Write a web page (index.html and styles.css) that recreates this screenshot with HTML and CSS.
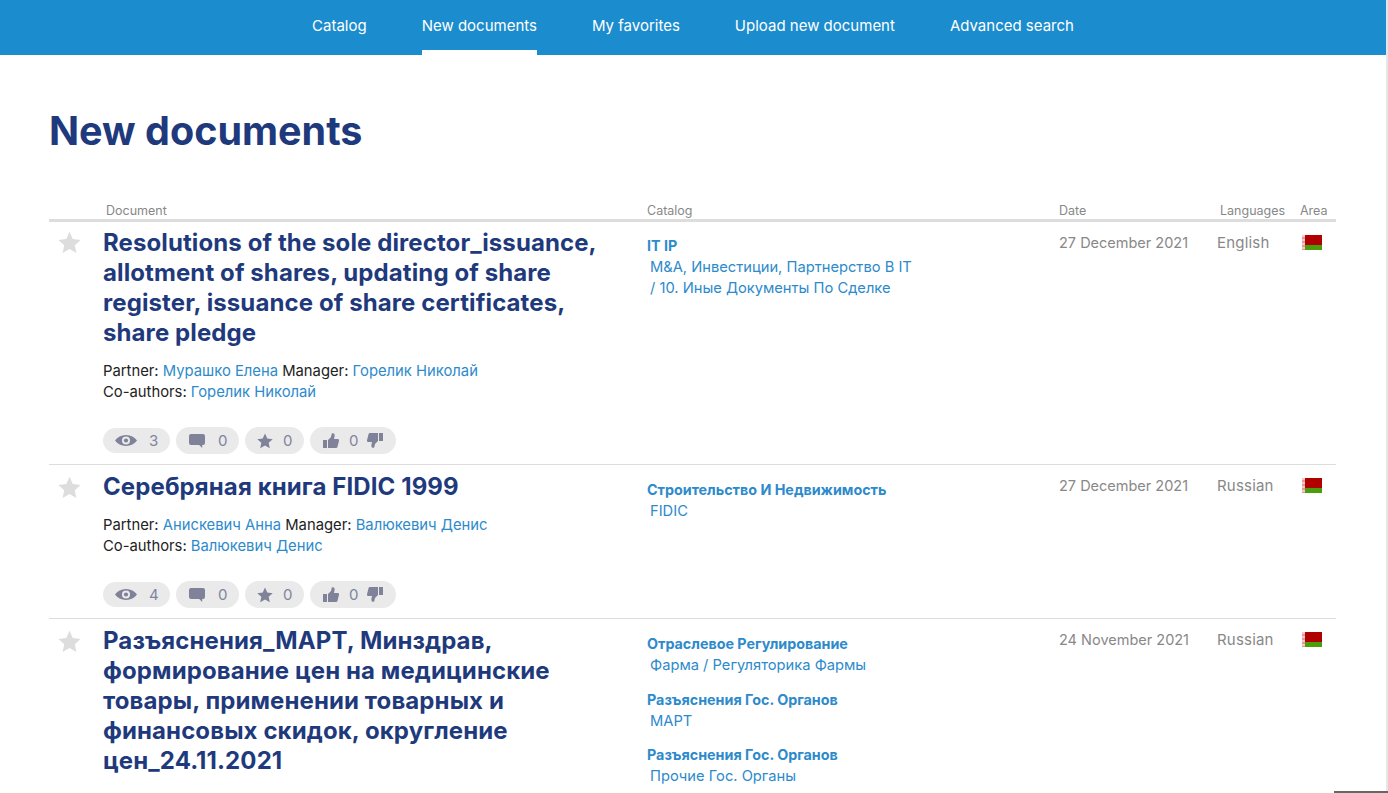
FILE: index.html
```html
<!DOCTYPE html>
<html lang="en">
<head>
<meta charset="utf-8">
<title>New documents</title>
<link rel="stylesheet" href="styles.css">
</head>
<body>
<svg class="defs" width="0" height="0" aria-hidden="true">
  <symbol id="i-star" viewBox="0 0 24 24"><path d="M12 .8l3.4 7.6 8.2.9-6.1 5.500 1.700 8.100L12 18.800l-7.200 4.100 1.700-8.100L.4 9.300l8.200-.9z"/></symbol>
  <symbol id="i-eye" viewBox="0 0 24 12"><path fill-rule="evenodd" d="M12 0c5.200 0 9.400 2.400 12 6-2.600 3.600-6.800 6-12 6S2.600 9.600 0 6c2.600-3.600 6.800-6 12-6zm0 1.600a4.400 4.400 0 1 0 0 8.800 4.400 4.400 0 0 0 0-8.800z"/><circle cx="12" cy="6" r="2.300"/></symbol>
  <symbol id="i-comment" viewBox="0 0 16 14"><path d="M2 0h12a2 2 0 0 1 2 2v7a2 2 0 0 1-2 2h-.8v3l-3-3H2a2 2 0 0 1-2-2V2a2 2 0 0 1 2-2z"/></symbol>
  <symbol id="i-up" viewBox="0 0 16 15"><path d="M0 7h4v8H0zM5 7l3-3 .8-3.500c1.800-1 3.200.5 2.800 2.500L11 6h3.700c.9 0 1.500.8 1.300 1.700l-1.500 6c-.2.800-.9 1.300-1.700 1.300H5z"/></symbol>
  <symbol id="i-down" viewBox="0 0 16 15"><path d="M16 8h-4V0h4zM11 8l-3 3-.8 3.500c-1.800 1-3.200-.5-2.800-2.500L5 9H1.300C.4 9-.2 8.200 0 7.300l1.500-6C1.700.5 2.400 0 3.200 0H11z"/></symbol>
</svg>

<header class="topbar">
  <nav class="nav">
    <a class="nav-item" href="#">Catalog</a>
    <a class="nav-item active" href="#">New documents</a>
    <a class="nav-item" href="#">My favorites</a>
    <a class="nav-item" href="#">Upload new document</a>
    <a class="nav-item" href="#">Advanced search</a>
  </nav>
</header>

<main class="content">
  <h1 class="page-title">New documents</h1>

  <div class="doc-table">
    <div class="row head">
      <div></div>
      <div class="h-doc">Document</div>
      <div>Catalog</div>
      <div>Date</div>
      <div class="h-lang">Languages</div>
      <div>Area</div>
    </div>

    <article class="row doc">
      <svg class="fav"><use href="#i-star"/></svg>
      <div class="main">
        <h2 class="doc-title">Resolutions of the sole director_issuance, allotment of shares, updating of share register, issuance of share certificates, share pledge</h2>
        <p class="people">Partner: <a href="#">Мурашко Елена</a> Manager: <a href="#">Горелик Николай</a><br>Co-authors: <a href="#">Горелик Николай</a></p>
        <div class="stats">
          <span class="pill pill-views"><svg class="ic eye"><use href="#i-eye"/></svg><span class="n">3</span></span>
          <span class="pill pill-comments"><svg class="ic cm"><use href="#i-comment"/></svg><span class="n">0</span></span>
          <span class="pill pill-favs"><svg class="ic st"><use href="#i-star"/></svg><span class="n">0</span></span>
          <span class="pill pill-votes"><svg class="ic th"><use href="#i-up"/></svg><span class="n">0</span><svg class="ic th"><use href="#i-down"/></svg></span>
        </div>
      </div>
      <div class="cats">
        <div class="cat"><a class="cat-name" href="#">IT IP</a><div class="cat-path"><a href="#">M&amp;A, Инвестиции, Партнерство В IT</a><br>/ <a href="#">10. Иные Документы По Сделке</a></div></div>
      </div>
      <div class="meta date">27 December 2021</div>
      <div class="meta lang">English</div>
      <div class="flag"></div>
    </article>

    <article class="row doc">
      <svg class="fav"><use href="#i-star"/></svg>
      <div class="main">
        <h2 class="doc-title">Серебряная книга FIDIC 1999</h2>
        <p class="people">Partner: <a href="#">Анискевич Анна</a> Manager: <a href="#">Валюкевич Денис</a><br>Co-authors: <a href="#">Валюкевич Денис</a></p>
        <div class="stats">
          <span class="pill pill-views"><svg class="ic eye"><use href="#i-eye"/></svg><span class="n">4</span></span>
          <span class="pill pill-comments"><svg class="ic cm"><use href="#i-comment"/></svg><span class="n">0</span></span>
          <span class="pill pill-favs"><svg class="ic st"><use href="#i-star"/></svg><span class="n">0</span></span>
          <span class="pill pill-votes"><svg class="ic th"><use href="#i-up"/></svg><span class="n">0</span><svg class="ic th"><use href="#i-down"/></svg></span>
        </div>
      </div>
      <div class="cats">
        <div class="cat"><a class="cat-name" href="#">Строительство И Недвижимость</a><div class="cat-path"><a href="#">FIDIC</a></div></div>
      </div>
      <div class="meta date">27 December 2021</div>
      <div class="meta lang">Russian</div>
      <div class="flag"></div>
    </article>

    <article class="row doc">
      <svg class="fav"><use href="#i-star"/></svg>
      <div class="main">
        <h2 class="doc-title">Разъяснения_МАРТ, Минздрав, формирование цен на медицинские товары, применении товарных и финансовых скидок, округление цен_24.11.2021</h2>
      </div>
      <div class="cats">
        <div class="cat"><a class="cat-name" href="#">Отраслевое Регулирование</a><div class="cat-path"><a href="#">Фарма</a> / <a href="#">Регуляторика Фармы</a></div></div>
        <div class="cat"><a class="cat-name" href="#">Разъяснения Гос. Органов</a><div class="cat-path"><a href="#">МАРТ</a></div></div>
        <div class="cat"><a class="cat-name" href="#">Разъяснения Гос. Органов</a><div class="cat-path"><a href="#">Прочие Гос. Органы</a></div></div>
      </div>
      <div class="meta date">24 November 2021</div>
      <div class="meta lang">Russian</div>
      <div class="flag"></div>
    </article>
  </div>
</main>
<div class="edge-v"></div>
<div class="edge-h"></div>
</body>
</html>
```
FILE: styles.css
```css
html, body {
  margin: 0;
  height: 793px;
  overflow: hidden;
  background: #fff;
}
body {
  font-family: Inter, "Liberation Sans", Arial, sans-serif;
  font-size: 15px;
  color: #222;
}
a { color: #2d8acb; text-decoration: none; }
.defs { position: absolute; }

.topbar { height: 55px; background: #1b8ccd; }
.nav { display: flex; justify-content: center; gap: 55px; height: 55px; padding-right: 2px; }
.nav-item {
  color: #fff;
  font-size: 15px;
  line-height: 52px;
  height: 55px;
  box-sizing: border-box;
}
.nav-item.active { border-bottom: 5px solid #fff; }

.content { padding: 0 52px 0 49px; }
.page-title {
  margin: 53px 0 0;
  font-size: 39.5px;
  line-height: 46px;
  font-weight: 700;
  color: #1f3a7c;
}

.doc-table { margin-top: 50px; }
.row {
  display: grid;
  grid-template-columns: 54px 544px 412px 158px 83px 36px;
}
.head {
  height: 15px;
  line-height: 14px;
  font-size: 12.5px;
  color: #888;
  border-bottom: 3px solid #ddd;
}
.h-doc { padding-left: 3px; }
.h-lang { padding-left: 3px; }

.doc { border-bottom: 1px solid #ddd; padding-top: 6px; }
.doc + .doc .main, .doc + .doc .cats { margin-top: 1px; }
.fav { display: block; width: 23px; height: 23px; margin: 3px 0 0 9px; fill: #ddd; }
.doc + .doc .fav { margin-top: 5px; }
.doc-title {
  margin: 0;
  width: 510px;
  font-size: 24px;
  line-height: 30px;
  font-weight: 700;
  letter-spacing: .1px;
  color: #1f3a7c;
}
.people { margin: 13px 0 0; font-size: 14.8px; line-height: 21px; }
.stats { display: flex; align-items: center; gap: 6px; margin: 24px 0 10px; }
.pill {
  display: flex;
  align-items: center;
  height: 27px;
  padding: 0 12px;
  border-radius: 14px;
  background: #eaeaea;
  color: #7f84a0;
  font-size: 15px;
}
.pill-views { height: 25px; }
.pill-comments { padding-left: 13px; }
.pill-votes { padding: 0 13px; }
.ic { fill: #7f8299; flex: none; }
.eye { width: 22px; height: 11px; }
.cm { width: 16px; height: 14px; }
.st { width: 16px; height: 16px; }
.th { width: 16px; height: 15px; }
.n { width: 9px; margin-left: 12px; }
.pill-comments .n { margin-left: 13px; }
.pill-favs .n { margin-left: 10px; }
.pill-votes .n { margin: 0 9px 0 10px; }

.cats { padding-top: 7px; }
.cat { margin-bottom: 12.5px; line-height: 21px; }
.cat-name { font-weight: 700; font-size: 14.3px; }
.cat-path { padding: 1px 0 0 3px; font-size: 14.7px; color: #2d8acb; }

.meta { line-height: 21px; color: #888; padding-top: 4px; }
.date { font-size: 14.5px; }
.lang { font-size: 15px; letter-spacing: .2px; }
.flag {
  width: 20px;
  height: 15px;
  margin: 7px 0 0 2px;
  background:
    repeating-linear-gradient(to bottom, #f3c9c9 0, #f3c9c9 2px, #e39a9a 2px, #e39a9a 4px) left top / 3px 100% no-repeat,
    linear-gradient(to bottom, #b00000 0, #b00000 10px, #4a9e0a 10px, #4a9e0a 15px);
}

.edge-v { position: fixed; right: 0; top: 0; bottom: 0; width: 2px; background: #e6e6e6; }
.edge-h { position: fixed; right: 0; bottom: 0; width: 54px; height: 2px; background: #666; }
```
